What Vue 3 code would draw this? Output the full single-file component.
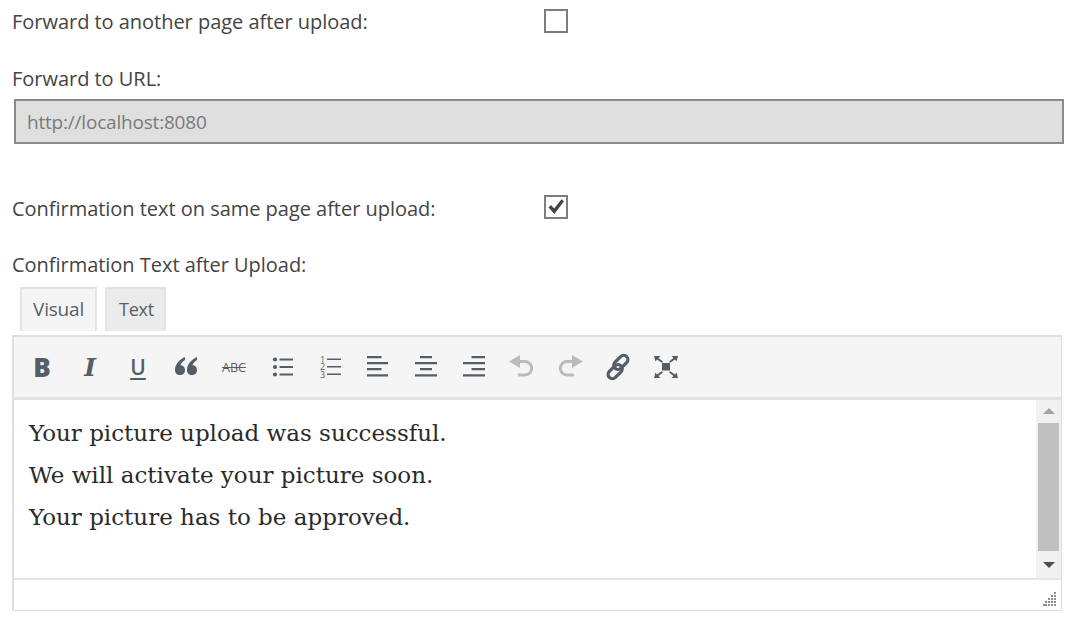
<script setup>
const paragraphs = [
  'Your picture upload was successful.',
  'We will activate your picture soon.',
  'Your picture has to be approved.'
]
const gripDots = [[11,0],[8,3],[11,3],[5,6],[8,6],[11,6],[2,9],[5,9],[8,9],[11,9],[0,12],[2,12],[5,12],[8,12],[11,12]]
</script>

<template>
  <main class="page">
    <div class="check-row">
      <span class="label">Forward to another page after upload:</span>
      <span class="box"></span>
    </div>
    <div class="label url-label">Forward to URL:</div>
    <div class="url-input">http://localhost:8080</div>

    <div class="check-row second">
      <span class="label">Confirmation text on same page after upload:</span>
      <span class="box">
        <svg width="20" height="20" viewBox="0 0 20 20"><path d="M2.500 10.500 L5 8 L8.200 11.600 L15.500 2.200 L18 4.200 L8.400 17 Z" fill="#3f464c"/></svg>
      </span>
    </div>
    <div class="label text-label">Confirmation Text after Upload:</div>

    <div class="tabs">
      <span class="tab active">Visual</span>
      <span class="tab plain">Text</span>
    </div>

    <section class="editor">
      <div class="toolbar">
        <span class="btn"><b class="glyph bold">B</b></span>
        <span class="btn"><i class="glyph ital">I</i></span>
        <span class="btn"><span class="glyph under">U</span></span>
        <span class="btn">
          <svg width="24" height="24" viewBox="0 0 24 24"><path d="M11 2C5.500 4.500 1 9 1 15c0 3 2 5 5 5s5-2 5-5c0-2.800-2-4.800-4.500-4.800.5-2 2-3.700 4.500-5.200zM23 2c-5.500 2.500-10 7-10 13 0 3 2 5 5 5s5-2 5-5c0-2.800-2-4.800-4.500-4.800.5-2 2-3.700 4.500-5.200z" fill="#555d66"/></svg>
        </span>
        <span class="btn"><span class="glyph strike">ABC</span></span>
        <span class="btn">
          <svg width="24" height="24" viewBox="0 0 24 24" fill="#555d66"><circle cx="5" cy="4.500" r="2.100"/><circle cx="5" cy="12" r="2.100"/><circle cx="5" cy="19.500" r="2.100"/><path d="M9.500 3.600H23v1.800H9.500zM9.500 11.100H23v1.800H9.500zM9.500 18.600H23v1.800H9.500z"/></svg>
        </span>
        <span class="btn ol">
          <span class="nums">1 2 3</span>
          <svg width="14" height="24" viewBox="0 0 14 24" fill="#555d66"><path d="M0 3.600h14v1.500H0zM0 11.100h14v1.500H0zM0 18.600h14v1.500H0z"/></svg>
        </span>
        <span class="btn">
          <svg width="24" height="24" viewBox="0 0 24 24" fill="#555d66"><path d="M1 1h14.500v2.300H1zM1 7h21v2.300H1zM1 13h14.500v2.300H1zM1 19.200h21v2.300H1z"/></svg>
        </span>
        <span class="btn">
          <svg width="24" height="24" viewBox="0 0 24 24" fill="#555d66"><path d="M6 1h12v2.300H6zM1 7h22v2.300H1zM6 13h12v2.300H6zM1 19.200h22v2.300H1z"/></svg>
        </span>
        <span class="btn">
          <svg width="24" height="24" viewBox="0 0 24 24" fill="#555d66"><path d="M9.500 1H23v2.300H9.500zM1 7h22v2.300H1zM9.500 13H23v2.300H9.500zM1 19.200h22v2.300H1z"/></svg>
        </span>
        <span class="btn">
          <svg width="26" height="24" viewBox="0 0 26 24" fill="none"><path d="M0 6.500 11 0v13z" fill="#b8bcbf"/><path d="M10 6.500h6a6.750 6.750 0 0 1 0 13.500H9" stroke="#b8bcbf" stroke-width="3"/></svg>
        </span>
        <span class="btn">
          <svg width="26" height="24" viewBox="0 0 26 24" fill="none"><path d="M26 6.500 15 0v13z" fill="#b8bcbf"/><path d="M16 6.500h-6a6.750 6.750 0 0 0 0 13.500h7" stroke="#b8bcbf" stroke-width="3"/></svg>
        </span>
        <span class="btn">
          <svg width="28" height="28" viewBox="0 0 28 28" fill="none" stroke="#555d66" stroke-width="3.200"><g transform="rotate(-45 14 14)"><rect x="0.500" y="11" width="16.500" height="8.500" rx="4.250"/><rect x="11" y="8.500" width="16.500" height="8.500" rx="4.250"/></g></svg>
        </span>
        <span class="btn">
          <svg width="26" height="24" viewBox="0 0 26 24" fill="#555d66"><path d="M9 8h8v7.500H9z"/><path d="M1 1h6.500L5.500 3l4.500 3.500-1.200 1.200L4 4.500 2.500 6.500zM25 1h-6.500l2 2L16 6.500l1.200 1.200L22 4.500l1.500 2zM1 23h6.500l-2-2 4.500-3.500-1.200-1.200L4 19.500l-1.500-2zM25 23h-6.500l2-2-4.500-3.500 1.200-1.200 4.800 3.200 1.500-2z"/></svg>
        </span>
      </div>
      <div class="content-wrap">
        <div class="content">
          <p v-for="p in paragraphs" :key="p">{{ p }}</p>
        </div>
        <div class="scrollbar">
          <span class="arrow up"></span>
          <span class="thumb"></span>
          <span class="arrow down"></span>
        </div>
      </div>
      <div class="status">
        <svg class="grip" width="14" height="14" viewBox="0 0 14 14" fill="#8d8d8d"><rect v-for="d in gripDots" :key="d.join()" :x="d[0]" :y="d[1]" width="2" height="2"/></svg>
      </div>
    </section>
  </main>
</template>

<style scoped>
.page {
  width: 1074px;
  height: 620px;
  box-sizing: border-box;
  padding: 9px 12px 0;
  font-family: "Open Sans", "Noto Sans", sans-serif;
  color: #444;
  overflow: hidden;
  background: #fff;
}
.label {
  font-size: 20px;
  line-height: 26px;
  letter-spacing: -0.03px;
  color: #444;
}
.check-row {
  display: flex;
  align-items: flex-start;
  height: 24px;
}
.check-row .label {
  width: 532px;
  flex: none;
}
.second .label {
  line-height: 28px;
}
.box {
  width: 24px;
  height: 24px;
  box-sizing: border-box;
  border: 2px solid #7e7e7e;
  background: #fff;
  display: flex;
  align-items: center;
  justify-content: center;
}
.url-label {
  margin-top: 32px;
  line-height: 28px;
}
.url-input {
  margin: 6px 0 0 2px;
  width: 1050px;
  height: 45px;
  box-sizing: border-box;
  border: 2px solid #8a8a8a;
  background: #dfdfdf;
  color: #7a7a7a;
  font-size: 19px;
  line-height: 43px;
  padding-left: 11px;
  letter-spacing: -0.2px;
}
.second {
  margin-top: 51px;
}
.text-label {
  margin-top: 33px;
}
.tabs {
  display: flex;
  gap: 8px;
  margin: 9px 0 0 8px;
  height: 44px;
}
.tab {
  box-sizing: border-box;
  width: 77px;
  height: 44px;
  text-align: center;
  line-height: 41px;
  font-size: 19px;
  letter-spacing: -0.2px;
  color: #5a5f64;
  background: #ebebeb;
  border: 2px solid #e3e3e3;
  border-bottom: 0;
}
.tab.plain {
  width: 61px;
  font-size: 18px;
  padding-left: 2px;
}
.tab.active {
  background: #f5f5f5;
}
.editor {
  margin-top: 4px;
  width: 1050px;
  height: 276px;
  box-sizing: border-box;
  border: 1px solid #dedede;
  border-top-width: 2px;
  border-left-width: 2px;
  display: flex;
  flex-direction: column;
  background: #fff;
}
.toolbar {
  height: 60px;
  flex: none;
  display: flex;
  align-items: center;
  padding-left: 4px;
  background: #f5f5f5;
  border-bottom: 3px solid #e2e2e2;
}
.btn {
  width: 48px;
  height: 48px;
  flex: none;
  display: flex;
  align-items: center;
  justify-content: center;
  color: #555d66;
}
.glyph {
  line-height: 1;
}
.bold {
  font: 800 26px "Open Sans", sans-serif;
}
.ital {
  font: italic 700 25px "DejaVu Serif", serif;
}
.under {
  font: 600 21px "Open Sans", sans-serif;
  text-decoration: underline;
  text-decoration-thickness: 2px;
  text-underline-offset: 3px;
}
.strike {
  font: 400 12.500px "Open Sans", sans-serif;
  text-decoration: line-through;
}
.ol {
  gap: 1px;
}
.nums {
  width: 6px;
  font-size: 9px;
  line-height: 7.500px;
  text-align: center;
}
.content-wrap {
  height: 178px;
  flex: none;
  display: flex;
}
.content {
  flex: 1;
  padding: 12px 0 0 15px;
  font-family: "DejaVu Serif", "Liberation Serif", serif;
  font-size: 23px;
  line-height: 42px;
  color: #2a2a2a;
}
.content p {
  margin: 0;
}
.scrollbar {
  width: 25px;
  flex: none;
  background: #f1f1f1;
  display: flex;
  flex-direction: column;
  align-items: center;
}
.arrow {
  width: 0;
  height: 0;
  flex: none;
  border-left: 6px solid transparent;
  border-right: 6px solid transparent;
}
.up {
  margin: 8px 0 9px;
  border-bottom: 6px solid #a3a3a3;
}
.thumb {
  width: 21px;
  height: 128px;
  flex: none;
  background: #c0c0c0;
}
.down {
  margin-top: 11px;
  border-top: 6px solid #4f4f4f;
}
.status {
  flex: 1;
  border-top: 2px solid #e6e6e6;
  position: relative;
}
.grip {
  position: absolute;
  right: 4px;
  bottom: 4px;
}
</style>
